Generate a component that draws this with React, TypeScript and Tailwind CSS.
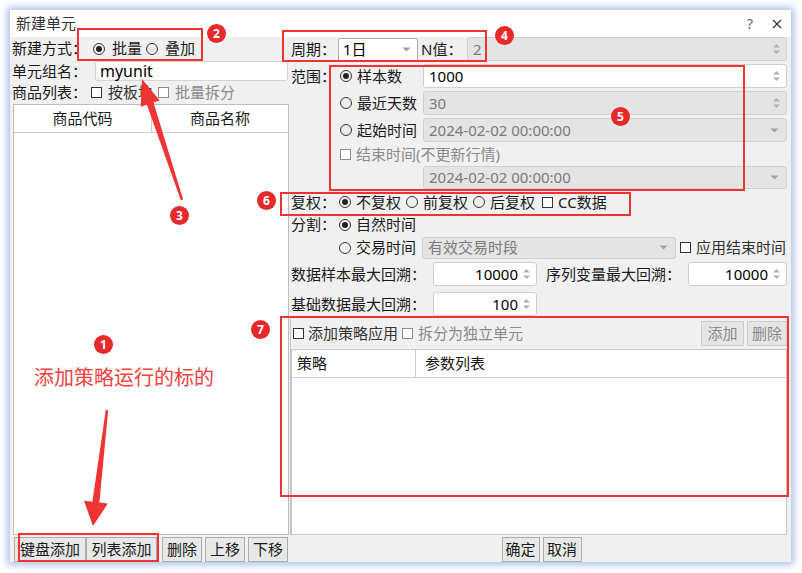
import React from "react";

function Radio({ checked = false }: { checked?: boolean }) {
  return (
    <span className="inline-flex w-[12px] h-[12px] shrink-0 rounded-full border border-[#333] items-center justify-center">
      {checked && <span className="w-[6px] h-[6px] rounded-full bg-[#222]" />}
    </span>
  );
}

function Check({ dim = false }: { dim?: boolean }) {
  return (
    <span
      className={
        dim
          ? "inline-block w-[11px] h-[11px] shrink-0 border border-[#8c8c8c] bg-white"
          : "inline-block w-[11px] h-[11px] shrink-0 border border-[#333] bg-white"
      }
    />
  );
}

function SpinArrows() {
  return (
    <svg width="9" height="14" viewBox="0 0 9 14" className="shrink-0">
      <path d="M1 5.5 L4.5 2 L8 5.5Z" fill="#b0b0b0" />
      <path d="M1 8.5 L4.5 12 L8 8.5Z" fill="#b0b0b0" />
    </svg>
  );
}

function DropArrow() {
  return (
    <svg width="9" height="5" viewBox="0 0 9 5" className="shrink-0">
      <path d="M0.5 0.5 L8.5 0.5 L4.5 4.5Z" fill="#a0a0a0" />
    </svg>
  );
}

function Btn({ label, w, dim = false }: { label: string; w: string; dim?: boolean }) {
  return (
    <div
      className={
        (dim
          ? "h-[25px] border border-[#cdcdcd] bg-[#e5e5e5] text-[#8a8a8a] "
          : "h-[25px] border border-[#adadad] bg-[#e8e8e8] text-[#1a1a1a] ") +
        w +
        " flex items-center justify-center shrink-0 overflow-hidden whitespace-nowrap"
      }
    >
      {label}
    </div>
  );
}

function Circle({ n, pos }: { n: string; pos: string }) {
  return (
    <div
      className={
        "absolute w-[19px] h-[19px] rounded-full bg-[#e8292b] text-white text-[12px] font-bold flex items-center justify-center leading-none " +
        pos
      }
    >
      {n}
    </div>
  );
}

export default function App() {
  return (
    <div className="relative w-[802px] h-[573px] bg-white pl-[10px] pt-[10px] overflow-hidden font-['Noto_Sans','Noto_Sans_CJK_SC',sans-serif] text-[15px] text-[#1a1a1a] leading-none">
      <div className="w-[781px] h-[552px] flex flex-col shadow-[0_0_7px_3px_rgba(120,155,220,0.6)]">
        {/* title bar */}
        <div className="h-[27px] bg-white flex items-center pl-[6px] pr-[9px] text-[#333]">
          <span>新建单元</span>
          <span className="ml-auto text-[14px] text-[#666]">?</span>
          <svg width="10" height="10" viewBox="0 0 10 10" className="ml-[19px]">
            <path d="M1 1 L9 9 M9 1 L1 9" stroke="#333" strokeWidth="1.2" />
          </svg>
        </div>

        {/* body */}
        <div className="h-[525px] flex bg-[#f0f0f0]">
          {/* left column */}
          <div className="w-[280px] flex flex-col">
            <div className="h-[23px] flex items-center pl-[2px]">
              <span className="w-[81px]">新建方式：</span>
              <Radio checked />
              <span className="ml-[7px]">批量</span>
              <span className="ml-[4px] flex"><Radio /></span>
              <span className="ml-[7px]">叠加</span>
            </div>
            <div className="h-[22px] flex items-center pl-[2px]">
              <span className="w-[83px]">单元组名：</span>
              <div className="w-[193px] h-[20px] bg-white border border-[#d4d4d4] rounded-[3px] flex items-center pl-[4px] text-[16px] text-black">
                myunit
              </div>
            </div>
            <div className="h-[21px] flex items-center pl-[2px]">
              <span className="w-[79px]">商品列表：</span>
              <Check />
              <span className="ml-[6px] text-[#333]">按板块</span>
              <span className="ml-[5px] flex"><Check dim /></span>
              <span className="ml-[6px] text-[#8a8a8a]">批量拆分</span>
            </div>
            <div className="ml-[3px] w-[276px] flex-1 mt-[1px] border border-[#bdbdbd] bg-white flex flex-col">
              <div className="h-[28px] flex border-b border-[#d0d0d0]">
                <div className="w-[138px] border-r border-[#d0d0d0] flex items-center justify-center">商品代码</div>
                <div className="flex-1 flex items-center justify-center">商品名称</div>
              </div>
            </div>
            <div className="h-[27px] flex items-start pt-[2px] pl-[4px]">
              <Btn label="键盘添加" w="w-[72px]" />
              <Btn label="列表添加" w="w-[71px]" />
              <div className="w-[5px]" />
              <Btn label="删除" w="w-[40px]" />
              <div className="w-[3px]" />
              <Btn label="上移" w="w-[40px]" />
              <div className="w-[3px]" />
              <Btn label="下移" w="w-[40px]" />
            </div>
          </div>

          {/* right column */}
          <div className="flex-1 flex flex-col">
            <div className="flex-1 flex flex-col pr-[4px]">
              {/* row 1 */}
              <div className="h-[24px] flex items-center pl-[1px]">
                <span className="w-[47px]">周期：</span>
                <div className="w-[80px] h-[23px] bg-white border border-[#adadad] rounded-[2px] flex items-center justify-between pl-[4px] pr-[6px] text-[15px] text-black">
                  <span>1日</span>
                  <DropArrow />
                </div>
                <span className="ml-[3px] w-[46px]">N值：</span>
                <div className="flex-1 h-[24px] bg-[#e4e4e4] border border-[#d0d0d0] rounded-[3px] flex items-center justify-between pl-[5px] pr-[5px] text-[#7a7a7a]">
                  <span>2</span>
                  <SpinArrows />
                </div>
              </div>
              {/* row 2 */}
              <div className="mt-[3px] h-[24px] flex items-center pl-[1px]">
                <span className="w-[49px]">范围：</span>
                <div className="w-[83px] flex items-center">
                  <Radio checked />
                  <span className="ml-[5px]">样本数</span>
                </div>
                <div className="flex-1 h-[24px] bg-white border border-[#cfcfcf] rounded-[3px] flex items-center justify-between pl-[5px] pr-[5px] text-black">
                  <span>1000</span>
                  <SpinArrows />
                </div>
              </div>
              {/* row 3 */}
              <div className="mt-[3px] h-[24px] flex items-center pl-[50px]">
                <div className="w-[83px] flex items-center">
                  <Radio />
                  <span className="ml-[5px]">最近天数</span>
                </div>
                <div className="flex-1 h-[24px] bg-[#e4e4e4] border border-[#d0d0d0] rounded-[3px] flex items-center justify-between pl-[5px] pr-[5px] text-[#7a7a7a]">
                  <span>30</span>
                  <SpinArrows />
                </div>
              </div>
              {/* row 4 */}
              <div className="mt-[3px] h-[24px] flex items-center pl-[50px]">
                <div className="w-[83px] flex items-center">
                  <Radio />
                  <span className="ml-[5px]">起始时间</span>
                </div>
                <div className="flex-1 h-[24px] bg-[#e4e4e4] border border-[#d0d0d0] rounded-[3px] flex items-center justify-between pl-[5px] pr-[7px] text-[#7a7a7a]">
                  <span>2024-02-02 00:00:00</span>
                  <DropArrow />
                </div>
              </div>
              {/* row 5 */}
              <div className="h-[24px] flex items-center pl-[50px]">
                <Check dim />
                <span className="ml-[5px] text-[#8a8a8a]">结束时间(不更新行情)</span>
              </div>
              {/* row 6 */}
              <div className="h-[23px] flex items-center pl-[133px]">
                <div className="flex-1 h-[23px] bg-[#e4e4e4] border border-[#d0d0d0] rounded-[3px] flex items-center justify-between pl-[5px] pr-[7px] text-[#7a7a7a]">
                  <span>2024-02-02 00:00:00</span>
                  <DropArrow />
                </div>
              </div>
              {/* row 7 复权 */}
              <div className="mt-[2px] h-[22px] flex items-center pl-[1px]">
                <span className="w-[48px]">复权：</span>
                <Radio checked />
                <span className="ml-[5px]">不复权</span>
                <span className="ml-[5px] flex"><Radio /></span>
                <span className="ml-[5px]">前复权</span>
                <span className="ml-[5px] flex"><Radio /></span>
                <span className="ml-[5px]">后复权</span>
                <span className="ml-[7px] flex"><Check /></span>
                <span className="ml-[5px]">CC数据</span>
              </div>
              {/* row 8 分割 */}
              <div className="h-[23px] flex items-center pl-[1px]">
                <span className="w-[48px]">分割：</span>
                <Radio checked />
                <span className="ml-[5px]">自然时间</span>
              </div>
              {/* row 9 */}
              <div className="h-[23px] flex items-center pl-[49px]">
                <Radio />
                <span className="ml-[5px] w-[60px]">交易时间</span>
                <div className="ml-[6px] w-[254px] h-[22px] bg-[#e4e4e4] border border-[#d0d0d0] rounded-[3px] flex items-center justify-between pl-[5px] pr-[7px] text-[#7a7a7a]">
                  <span>有效交易时段</span>
                  <DropArrow />
                </div>
                <span className="ml-[4px] flex"><Check /></span>
                <span className="ml-[5px] text-[#333]">应用结束时间</span>
              </div>
              {/* row 10 */}
              <div className="mt-[3px] h-[24px] flex items-center pl-[1px]">
                <span className="w-[142px]">数据样本最大回溯：</span>
                <div className="w-[104px] h-[24px] bg-white border border-[#cfcfcf] rounded-[3px] flex items-center justify-end gap-[4px] pr-[5px] text-black">
                  <span>10000</span>
                  <SpinArrows />
                </div>
                <span className="ml-[9px] w-[142px]">序列变量最大回溯：</span>
                <div className="flex-1 h-[24px] bg-white border border-[#cfcfcf] rounded-[3px] flex items-center justify-end gap-[4px] pr-[5px] text-black">
                  <span>10000</span>
                  <SpinArrows />
                </div>
              </div>
              {/* row 11 */}
              <div className="mt-[6px] h-[24px] flex items-center pl-[1px]">
                <span className="w-[142px]">基础数据最大回溯：</span>
                <div className="w-[104px] h-[24px] bg-white border border-[#cfcfcf] rounded-[3px] flex items-center justify-end gap-[4px] pr-[5px] text-black">
                  <span>100</span>
                  <SpinArrows />
                </div>
              </div>
              {/* strategy panel */}
              <div className="mt-[3px] flex-1 flex flex-col border-l border-[#c4c4c4]">
                <div className="h-[28px] flex items-center pl-[2px]">
                  <Check />
                  <span className="ml-[4px] text-[#333]">添加策略应用</span>
                  <span className="ml-[4px] flex"><Check dim /></span>
                  <span className="ml-[5px] text-[#8a8a8a]">拆分为独立单元</span>
                  <div className="ml-auto flex">
                    <Btn label="添加" w="w-[43px]" dim />
                    <div className="w-[3px]" />
                    <Btn label="删除" w="w-[40px]" dim />
                  </div>
                </div>
                <div className="mt-[2px] flex-1 bg-white border border-[#c8c8c8] flex flex-col">
                  <div className="h-[28px] flex border-b border-[#d0d0d0]">
                    <div className="w-[124px] border-r border-[#d0d0d0] flex items-center pl-[5px]">策略</div>
                    <div className="flex-1 flex items-center pl-[9px]">参数列表</div>
                  </div>
                </div>
              </div>
            </div>
            <div className="h-[27px] flex justify-center pt-[2px] pl-[2px]">
              <Btn label="确定" w="w-[38px]" />
              <div className="w-[3px]" />
              <Btn label="取消" w="w-[39px]" />
            </div>
          </div>
        </div>
      </div>

      {/* annotations */}
      <div className="absolute left-[77px] top-[28px] w-[126px] h-[33px] border-2 border-[#f03434]" />
      <div className="absolute left-[282px] top-[30px] w-[205px] h-[32px] border-2 border-[#f03434]" />
      <div className="absolute left-[329px] top-[65px] w-[416px] h-[126px] border-2 border-[#f03434]" />
      <div className="absolute left-[280px] top-[192px] w-[351px] h-[24px] border-2 border-[#f03434]" />
      <div className="absolute left-[280px] top-[316px] w-[509px] h-[181px] border-2 border-[#f03434]" />
      <div className="absolute left-[18px] top-[533px] w-[141px] h-[29px] border-2 border-[#f03434]" />

      <svg className="absolute left-0 top-0" width="802" height="573" viewBox="0 0 802 573">
        <polygon
          points="142,79 159.7,100.6 153.5,102.6 183.1,199.6 180.9,200.4 146.9,104.8 140.7,106.8"
          fill="#f03434"
        />
        <polygon
          points="93,526 107.8,503.6 99.4,502.6 108.2,410.1 105.8,409.9 92.4,501.8 84,500.8"
          fill="#f03434"
        />
      </svg>

      <Circle n="2" pos="left-[207px] top-[24px]" />
      <Circle n="4" pos="left-[495px] top-[26px]" />
      <Circle n="5" pos="left-[611px] top-[107px]" />
      <Circle n="6" pos="left-[257px] top-[191px]" />
      <Circle n="7" pos="left-[251px] top-[320px]" />
      <Circle n="3" pos="left-[170px] top-[206px]" />
      <Circle n="1" pos="left-[94px] top-[335px]" />

      <div className="absolute left-[34px] top-[366px] text-[20px] leading-[24px] text-[#f5403c] whitespace-nowrap">
        添加策略运行的标的
      </div>
    </div>
  );
}
